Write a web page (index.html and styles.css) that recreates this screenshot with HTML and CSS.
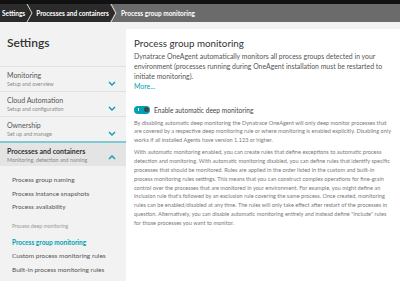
FILE: index.html
```html
<!DOCTYPE html>
<html lang="en">
<head>
<meta charset="utf-8">
<title>Process group monitoring</title>
<link rel="stylesheet" href="styles.css">
</head>
<body>
<div class="topstrip"></div>
<nav class="crumbs">
  <span class="crumb">Settings</span>
  <svg class="sep" viewBox="0 0 8 18" width="8" height="18"><polyline points="1,0 6,9 1,18" fill="none" stroke="#d8d8d8" stroke-width="1"/></svg>
  <span class="crumb">Processes and containers</span>
  <span class="crumb active"><svg class="sep" viewBox="0 0 8 18" width="8" height="18"><polygon points="0,0 5,9 0,18" fill="#2b2b2b"/><polyline points="1,0 6,9 1,18" fill="none" stroke="#d8d8d8" stroke-width="1"/></svg><span class="crumb-text">Process group monitoring</span></span>
</nav>
<div class="layout">
  <aside class="side">
    <h1 class="side-title">Settings</h1>
    <div class="sec">
      <div class="sec-text"><div class="sec-title">Monitoring</div><div class="sec-sub">Setup and overview</div></div>
      <svg class="chev" viewBox="0 0 8 5" width="8" height="5"><polyline points="1,1 4,4 7,1" fill="none" stroke="#00a1b2" stroke-width="1.4"/></svg>
    </div>
    <div class="sec">
      <div class="sec-text"><div class="sec-title">Cloud Automation</div><div class="sec-sub">Setup and configuration</div></div>
      <svg class="chev" viewBox="0 0 8 5" width="8" height="5"><polyline points="1,1 4,4 7,1" fill="none" stroke="#00a1b2" stroke-width="1.4"/></svg>
    </div>
    <div class="sec">
      <div class="sec-text"><div class="sec-title">Ownership</div><div class="sec-sub">Set up and manage</div></div>
      <svg class="chev" viewBox="0 0 8 5" width="8" height="5"><polyline points="1,1 4,4 7,1" fill="none" stroke="#00a1b2" stroke-width="1.4"/></svg>
    </div>
    <div class="sec open">
      <div class="sec-text"><div class="sec-title">Processes and containers</div><div class="sec-sub">Monitoring, detection and naming</div></div>
      <svg class="chev" viewBox="0 0 8 5" width="8" height="5"><polyline points="1,4 4,1 7,4" fill="none" stroke="#00a1b2" stroke-width="1.4"/></svg>
    </div>
    <ul class="subs">
      <li class="sub">Process group naming</li>
      <li class="sub">Process instance snapshots</li>
      <li class="sub">Process availability</li>
      <li class="sub-label">Process deep monitoring</li>
      <li class="sub current">Process group monitoring</li>
      <li class="sub">Custom process monitoring rules</li>
      <li class="sub">Built-in process monitoring rules</li>
    </ul>
  </aside>
  <main class="panel">
    <h2 class="panel-title">Process group monitoring</h2>
    <p class="intro">Dynatrace OneAgent automatically monitors all process groups detected in your environment (processes running during OneAgent installation must be restarted to initiate monitoring).</p>
    <a class="more" href="#">More...</a>
    <div class="toggle-row">
      <span class="toggle"><span class="toggle-i"></span><span class="knob"></span></span>
      <span class="toggle-label">Enable automatic deep monitoring</span>
    </div>
    <p class="body">By disabling automatic deep monitoring the Dynatrace OneAgent will only deep monitor processes that are covered by a respective deep monitoring rule or where monitoring is enabled explicitly. Disabling only works if all installed Agents have version 1.123 or higher.</p>
    <p class="body">With automatic monitoring enabled, you can create rules that define exceptions to automatic process detection and monitoring. With automatic monitoring disabled, you can define rules that identify specific processes that should be monitored. Rules are applied in the order listed in the custom and built-in process monitoring rules settings. This means that you can construct complex operations for fine-grain control over the processes that are monitored in your environment. For example, you might define an inclusion rule that's followed by an exclusion rule covering the same process. Once created, monitoring rules can be enabled/disabled at any time. The rules will only take effect after restart of the processes in question. Alternatively, you can disable automatic monitoring entirely and instead define "Include" rules for those processes you want to monitor.</p>
  </main>
</div>
</body>
</html>
```
FILE: styles.css
```css
* { box-sizing: border-box; }
html, body { margin: 0; padding: 0; }
body {
  width: 400px;
  height: 281px;
  overflow: hidden;
  background: #f2f2f2;
  font-family: "Lato", "Liberation Sans", sans-serif;
  color: #454646;
}
.topstrip { height: 4px; background: #111; }
.crumbs {
  height: 18px;
  background: #2b2b2b;
  display: flex;
  align-items: center;
  color: #fff;
  font-size: 6.5px;
  font-weight: 700;
}
.crumb { padding: 0 1px 0 2px; white-space: nowrap; }
.sep { display: block; flex: none; }
.crumb.active {
  flex: 1;
  height: 18px;
  background: #6b6b6b;
  display: flex;
  align-items: center;
  padding: 0;
}
.crumb-text { padding-left: 3px; }
.layout { display: flex; height: 259px; }
.side { width: 126px; flex: none; }
.side-title {
  margin: 14px 0 16px 7px;
  font-size: 12px;
  line-height: 14px;
  font-weight: 600;
  color: #333;
}
.sec {
  border-top: 1px solid #e2e2e2;
  padding: 4px 8px 3px 7px;
  display: flex;
  align-items: flex-start;
  justify-content: space-between;
}
.sec-title { font-size: 7px; line-height: 9px; color: #555; }
.sec-sub { font-size: 5.4px; line-height: 8px; color: #8a8a8a; }
.chev { margin-top: 10px; margin-right: 2px; }
.sec.open {
  border-top: 2px solid #7fcbd4;
  background: #e4e4e4;
  padding-top: 4px;
  padding-bottom: 2px;
}
.sec.open .sec-title { font-weight: 700; color: #333; }
.sec.open .chev { margin-top: 8px; }
.subs { list-style: none; margin: 0; padding: 7px 0 0 12px; }
.sub { font-size: 6.5px; line-height: 13.5px; color: #555; white-space: nowrap; }
.sub-label { font-size: 5.2px; line-height: 13.5px; color: #9a9a9a; margin-top: 6px; margin-bottom: 2.5px; }
.sub.current { color: #00a1b2; font-weight: 700; }
.panel {
  flex: 1;
  margin-top: 7px;
  background: #fff;
  padding: 8px 8px 0 8px;
}
.panel-title {
  margin: 0 0 2px 0;
  font-size: 9.8px;
  line-height: 12px;
  font-weight: 400;
  color: #333;
}
.intro { margin: 0; font-size: 6.9px; line-height: 10px; color: #555; }
.more { display: block; font-size: 6.9px; line-height: 10px; color: #00a1b2; text-decoration: none; }
.toggle-row { display: flex; align-items: center; height: 10px; margin-top: 13.5px; }
.toggle {
  position: relative;
  width: 16px;
  height: 8px;
  border-radius: 4px;
  background: #00a1b2;
  flex: none;
}
.toggle-i { position: absolute; left: 4px; top: 2.5px; width: 1px; height: 3px; background: #fff; }
.knob { position: absolute; right: 1.5px; top: 1.5px; width: 5px; height: 5px; border-radius: 50%; background: #454646; }
.toggle-label { margin-left: 4px; font-size: 6.6px; color: #454646; }
.body { margin: 4px 0 0 0; font-size: 5.6px; line-height: 8.8px; color: #7a7a7a; }
.body + .body { margin-top: 3.5px; }
```
